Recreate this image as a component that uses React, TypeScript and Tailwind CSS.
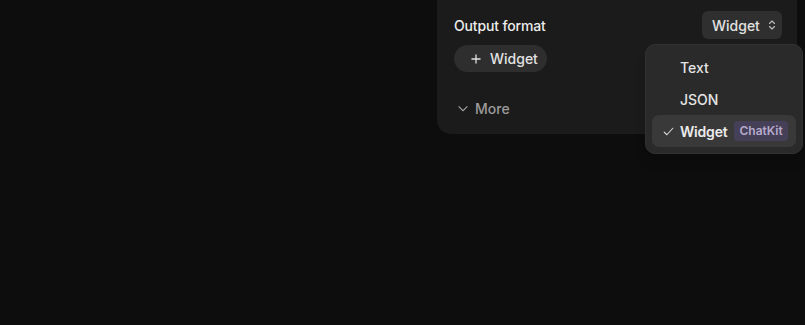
import React from "react";

function ChevronsUpDown() {
  return (
    <svg width="12" height="12" viewBox="0 0 24 24" fill="none" stroke="currentColor" strokeWidth="2.2" strokeLinecap="round" strokeLinejoin="round">
      <path d="m7 15 5 5 5-5" />
      <path d="m7 9 5-5 5 5" />
    </svg>
  );
}

function Plus() {
  return (
    <svg width="14" height="14" viewBox="0 0 24 24" fill="none" stroke="currentColor" strokeWidth="2.2" strokeLinecap="round">
      <path d="M12 5v14" />
      <path d="M5 12h14" />
    </svg>
  );
}

function ChevronDown() {
  return (
    <svg width="14" height="14" viewBox="0 0 24 24" fill="none" stroke="currentColor" strokeWidth="2" strokeLinecap="round" strokeLinejoin="round">
      <path d="m5 8 7 7 7-7" />
    </svg>
  );
}

function Check() {
  return (
    <svg width="13" height="13" viewBox="0 0 24 24" fill="none" stroke="currentColor" strokeWidth="2" strokeLinecap="round" strokeLinejoin="round">
      <path d="M4 13l5 5L20 6" />
    </svg>
  );
}

export default function App() {
  return (
    <div
      className="w-[805px] h-[325px] bg-[#0d0d0d] flex justify-end pr-[8px] overflow-hidden"
      style={{ fontFamily: "Inter, 'Noto Sans', sans-serif" }}
    >
      <div className="relative w-[360px] h-[134px] bg-[#1b1b1b] rounded-b-[14px] pt-[10px] px-[17px] pr-[15px] flex flex-col">
        <div className="flex items-center justify-between h-[30px]">
          <span className="text-[14px] font-medium text-[#ececec] tracking-[-0.15px]">Output format</span>
          <button className="h-[28px] w-[80px] rounded-md bg-[#2f2f2f] flex items-center pl-[10px] gap-[6px] text-[14px] font-medium text-[#e2e2e2]">
            Widget
            <span className="text-[#bdbdbd]"><ChevronsUpDown /></span>
          </button>
        </div>
        <div className="mt-[5px]">
          <button className="h-[27px] w-[93px] rounded-full bg-[#2e2e2e] flex items-center pl-[15px] gap-[7px] text-[14px] font-medium text-[#e2e2e2]">
            <Plus />
            Widget
          </button>
        </div>
        <div className="mt-[26px] flex items-center gap-[5px] pl-[2px] text-[14px] font-medium text-[#9b9b9b]">
          <ChevronDown />
          More
        </div>

        <div className="absolute left-[208px] top-[44px] w-[158px] rounded-[10px] bg-[#2a2a2a] border border-[#323232] p-[6px] shadow-lg">
          <div className="h-[32px] flex items-center pl-[28px] text-[14px] font-medium text-[#e4e4e4]">Text</div>
          <div className="h-[32px] flex items-center pl-[28px] text-[14px] font-medium text-[#e4e4e4]">JSON</div>
          <div className="h-[32px] flex items-center rounded-[7px] bg-[#393939] pl-[10px] text-[14px] font-semibold text-[#ececec]">
            <span className="w-[18px] text-[#dcdcdc]"><Check /></span>
            <span className="tracking-[-0.2px]">Widget</span>
            <span className="ml-[7px] h-[20px] px-[5px] rounded-[4px] bg-[#463f58] text-[#b6aacc] text-[12px] font-semibold flex items-center">ChatKit</span>
          </div>
        </div>
      </div>
    </div>
  );
}
